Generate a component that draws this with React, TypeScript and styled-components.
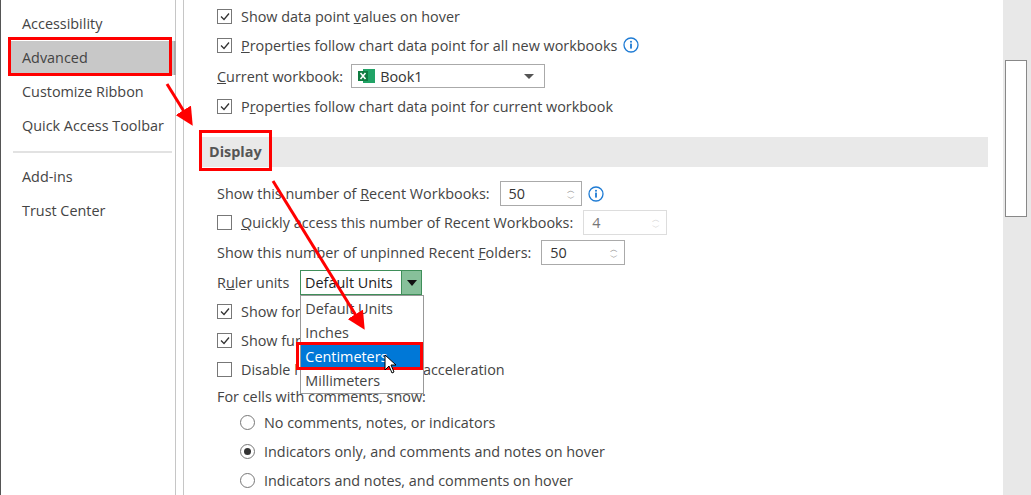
import styled, { createGlobalStyle } from 'styled-components'

const Global = createGlobalStyle`
  html, body { margin: 0; padding: 0; background: #fff; }
  body { font-family: "Open Sans", "Noto Sans", sans-serif; font-size: 14.4px; color: #444; }
`

const Page = styled.div`
  position: relative;
  width: 1031px;
  height: 495px;
  overflow: hidden;
  display: flex;
  background: #fff;
`

const Sidebar = styled.div`
  width: 176px;
  border-left: 1px solid #555;
  border-right: 1px solid #c6c6c6;
  padding-top: 7px;
  box-sizing: border-box;
`

const NavItem = styled.div<{ $active?: boolean }>`
  height: 34px;
  line-height: 34px;
  margin-left: 9px;
  margin-right: -1px;
  padding-left: 12px;
  background: ${p => (p.$active ? '#c8c8c8' : 'transparent')};
  border-right: ${p => (p.$active ? '2px solid #aaa' : 'none')};
`

const Sep = styled.div`
  height: 2px;
  background: #e2e2e2;
  margin: 8px 3px 7px 12px;
`

const Gutter = styled.div`
  width: 7px;
  border-right: 1px solid #c6c6c6;
`

const Content = styled.div`
  flex: 1;
  padding: 2px 0 0 17px;
`

const Row = styled.div<{ $indent?: number; $h?: number }>`
  display: flex;
  align-items: center;
  height: ${p => p.$h ?? 29}px;
  padding-left: ${p => p.$indent ?? 16}px;
  white-space: nowrap;
`

const Label = styled.span`
  white-space: pre;
`

const Box = styled.span`
  width: 13px;
  height: 13px;
  border: 1px solid #777;
  margin-right: 9px;
  display: inline-flex;
  align-items: center;
  justify-content: center;
  flex: none;
`

const Radio = styled.span<{ $on?: boolean }>`
  width: 13px;
  height: 13px;
  border-radius: 50%;
  border: 1px solid #777;
  margin-right: 9px;
  display: inline-flex;
  align-items: center;
  justify-content: center;
  &::after {
    content: '';
    width: 7px;
    height: 7px;
    border-radius: 50%;
    background: ${p => (p.$on ? '#333' : 'transparent')};
  }
`

const U = styled.span`text-decoration: underline;`

const Header = styled.div`
  height: 30px;
  line-height: 30px;
  background: #e9e9e9;
  margin: 17px 15px 12px 0;
  padding-left: 8px;
  font-weight: 700;
  color: #555;
`

const Select = styled.div<{ $w: number }>`
  width: ${p => p.$w}px;
  height: 24px;
  border: 1px solid #aaa;
  display: flex;
  align-items: center;
  margin-left: 8px;
  box-sizing: border-box;
  padding-left: 6px;
  color: #333;
`

const Caret = styled.span`
  margin-left: auto;
  width: 0; height: 0;
  border-left: 5px solid transparent;
  border-right: 5px solid transparent;
  border-top: 5px solid #555;
  margin-right: 10px;
`

const Spin = styled.div<{ $w: number; $dis?: boolean }>`
  width: ${p => p.$w}px;
  height: 25px;
  border: 1px solid ${p => (p.$dis ? '#ddd' : '#aaa')};
  margin-left: 10px;
  box-sizing: border-box;
  display: flex;
  align-items: center;
  padding-left: 8px;
  color: ${p => (p.$dis ? '#777' : '#333')};
`

const Arrows = styled.span<{ $dis?: boolean }>`
  margin-left: auto;
  margin-right: 6px;
  display: flex;
  flex-direction: column;
  font-size: 8px;
  line-height: 8px;
  color: ${p => (p.$dis ? '#ccc' : '#777')};
`

const RulerSelect = styled.div`
  width: 122px;
  height: 25px;
  border: 1px solid #3f8f5a;
  margin-left: 11px;
  box-sizing: border-box;
  display: flex;
  align-items: center;
  color: #222;
  position: relative;
`

const GreenBtn = styled.span`
  margin-left: auto;
  width: 19px;
  height: 23px;
  background: #87c09a;
  border-left: 1px solid #3f8f5a;
  display: flex;
  align-items: center;
  justify-content: center;
  &::after {
    content: '';
    border-left: 5px solid transparent;
    border-right: 5px solid transparent;
    border-top: 6px solid #111;
  }
`

const List = styled.div`
  position: absolute;
  left: -1px;
  top: 24px;
  width: 122px;
  background: #fff;
  border: 1px solid #999;
  padding: 1px 0 0;
  z-index: 2;
`

const Opt = styled.div<{ $sel?: boolean }>`
  height: 24px;
  line-height: 24px;
  padding-left: 4px;
  background: ${p => (p.$sel ? '#0078d7' : '#fff')};
  color: ${p => (p.$sel ? '#fff' : '#444')};
`

const Scrollbar = styled.div`
  width: 28px;
  background: #e8e8e8;
  padding-top: 60px;
  box-sizing: border-box;
`

const Thumb = styled.div`
  margin-left: 2px;
  width: 20px;
  height: 155px;
  background: #fff;
  border: 1px solid #888;
`

const RedBox = styled.div<{ $x: number; $y: number; $w: number; $h: number }>`
  position: absolute;
  left: ${p => p.$x}px;
  top: ${p => p.$y}px;
  width: ${p => p.$w}px;
  height: ${p => p.$h}px;
  border: 3px solid #f00;
  box-sizing: border-box;
  z-index: 5;
`

const Overlay = styled.svg`
  position: absolute;
  left: 0;
  top: 0;
  z-index: 6;
  pointer-events: none;
`

const Check = () => (
  <svg width="10" height="9" viewBox="0 0 10 9"><path d="M1 4.5 L4 7.5 L9 1.5" fill="none" stroke="#333" strokeWidth="1.3" /></svg>
)

const Info = () => (
  <svg width="16" height="16" viewBox="0 0 16 16" style={{ marginLeft: 6 }}>
    <circle cx="8" cy="8" r="7" fill="none" stroke="#1e7bd4" strokeWidth="1.3" />
    <circle cx="8" cy="4.8" r="1" fill="#1e7bd4" />
    <rect x="7.1" y="6.6" width="1.8" height="5" fill="#1e7bd4" />
  </svg>
)

const XlIcon = () => (
  <svg width="18" height="16" viewBox="0 0 18 16" style={{ marginRight: 4 }}>
    <rect x="5" y="1" width="12" height="14" fill="#21a366" />
    <rect x="0" y="3" width="10" height="10" fill="#107c41" />
    <path d="M2.5 5 L7.5 11 M7.5 5 L2.5 11" stroke="#fff" strokeWidth="1.6" />
  </svg>
)

const SpinArrows = ({ dis }: { dis?: boolean }) => (
  <Arrows $dis={dis}><span>︿</span><span>﹀</span></Arrows>
)

export default function App() {
  return (
    <Page>
      <Global />
      <Sidebar>
        <NavItem>Accessibility</NavItem>
        <NavItem $active>Advanced</NavItem>
        <NavItem>Customize Ribbon</NavItem>
        <NavItem>Quick Access Toolbar</NavItem>
        <Sep />
        <NavItem>Add-ins</NavItem>
        <NavItem>Trust Center</NavItem>
      </Sidebar>
      <Gutter />
      <Content>
        <Row $h={28}><Box><Check /></Box><Label>Show data point <U>v</U>alues on hover</Label></Row>
        <Row $h={30}><Box><Check /></Box><Label><U>P</U>roperties follow chart data point for all new workbooks</Label><Info /></Row>
        <Row $h={32}><Label><U>C</U>urrent workbook:</Label><Select $w={194}><XlIcon />Book1<Caret /></Select></Row>
        <Row $h={28}><Box><Check /></Box><Label>P<U>r</U>operties follow chart data point for current workbook</Label></Row>
        <Header>Display</Header>
        <Row><Label>Show this number of <U>R</U>ecent Workbooks:</Label><Spin $w={82}>50<SpinArrows /></Spin><Info /></Row>
        <Row><Box /><Label><U>Q</U>uickly access this number of Recent Workbooks:</Label><Spin $w={84} $dis>4<SpinArrows dis /></Spin></Row>
        <Row $h={31}><Label>Show this number of unpinned Recent <U>F</U>olders:</Label><Spin $w={84}>50<SpinArrows /></Spin></Row>
        <Row><Label>R<U>u</U>ler units</Label>
          <RulerSelect><Label> Default Units</Label><GreenBtn />
            <List>
              <Opt>Default Units</Opt>
              <Opt>Inches</Opt>
              <Opt $sel>Centimeters</Opt>
              <Opt>Millimeters</Opt>
            </List>
          </RulerSelect>
        </Row>
        <Row><Box><Check /></Box>Show for</Row>
        <Row><Box><Check /></Box>Show fur</Row>
        <Row><Box /><Label>Disable hardware graphics acceleration</Label></Row>
        <Row $h={24}><Label>For cells with comments, show:</Label></Row>
        <Row $indent={39}><Radio /><Label>No comments, notes, or indicators</Label></Row>
        <Row $indent={39}><Radio $on /><Label>Indicators only, and comments and notes on hover</Label></Row>
        <Row $indent={39}><Radio /><Label>Indicators and notes, and comments on hover</Label></Row>
      </Content>
      <Scrollbar><Thumb /></Scrollbar>

      <RedBox $x={8} $y={37} $w={164} $h={39} />
      <RedBox $x={199} $y={130} $w={73} $h={41} />
      <RedBox $x={296} $y={342} $w={127} $h={28} />
      <Overlay width="1031" height="495">
        <defs>
          <marker id="ah" markerWidth="6" markerHeight="6" refX="3" refY="3" orient="auto">
            <path d="M0 0 L6 3 L0 6 Z" fill="#f00" />
          </marker>
        </defs>
        <line x1="167" y1="84" x2="188" y2="118" stroke="#f00" strokeWidth="3" markerEnd="url(#ah)" />
        <line x1="273" y1="181" x2="360" y2="322" stroke="#f00" strokeWidth="3" markerEnd="url(#ah)" />
        <path d="M385 355 L385 370 L389 366 L392 373 L394 372 L391 365 L396 365 Z" fill="#fff" stroke="#000" strokeWidth="1" />
      </Overlay>
    </Page>
  )
}
